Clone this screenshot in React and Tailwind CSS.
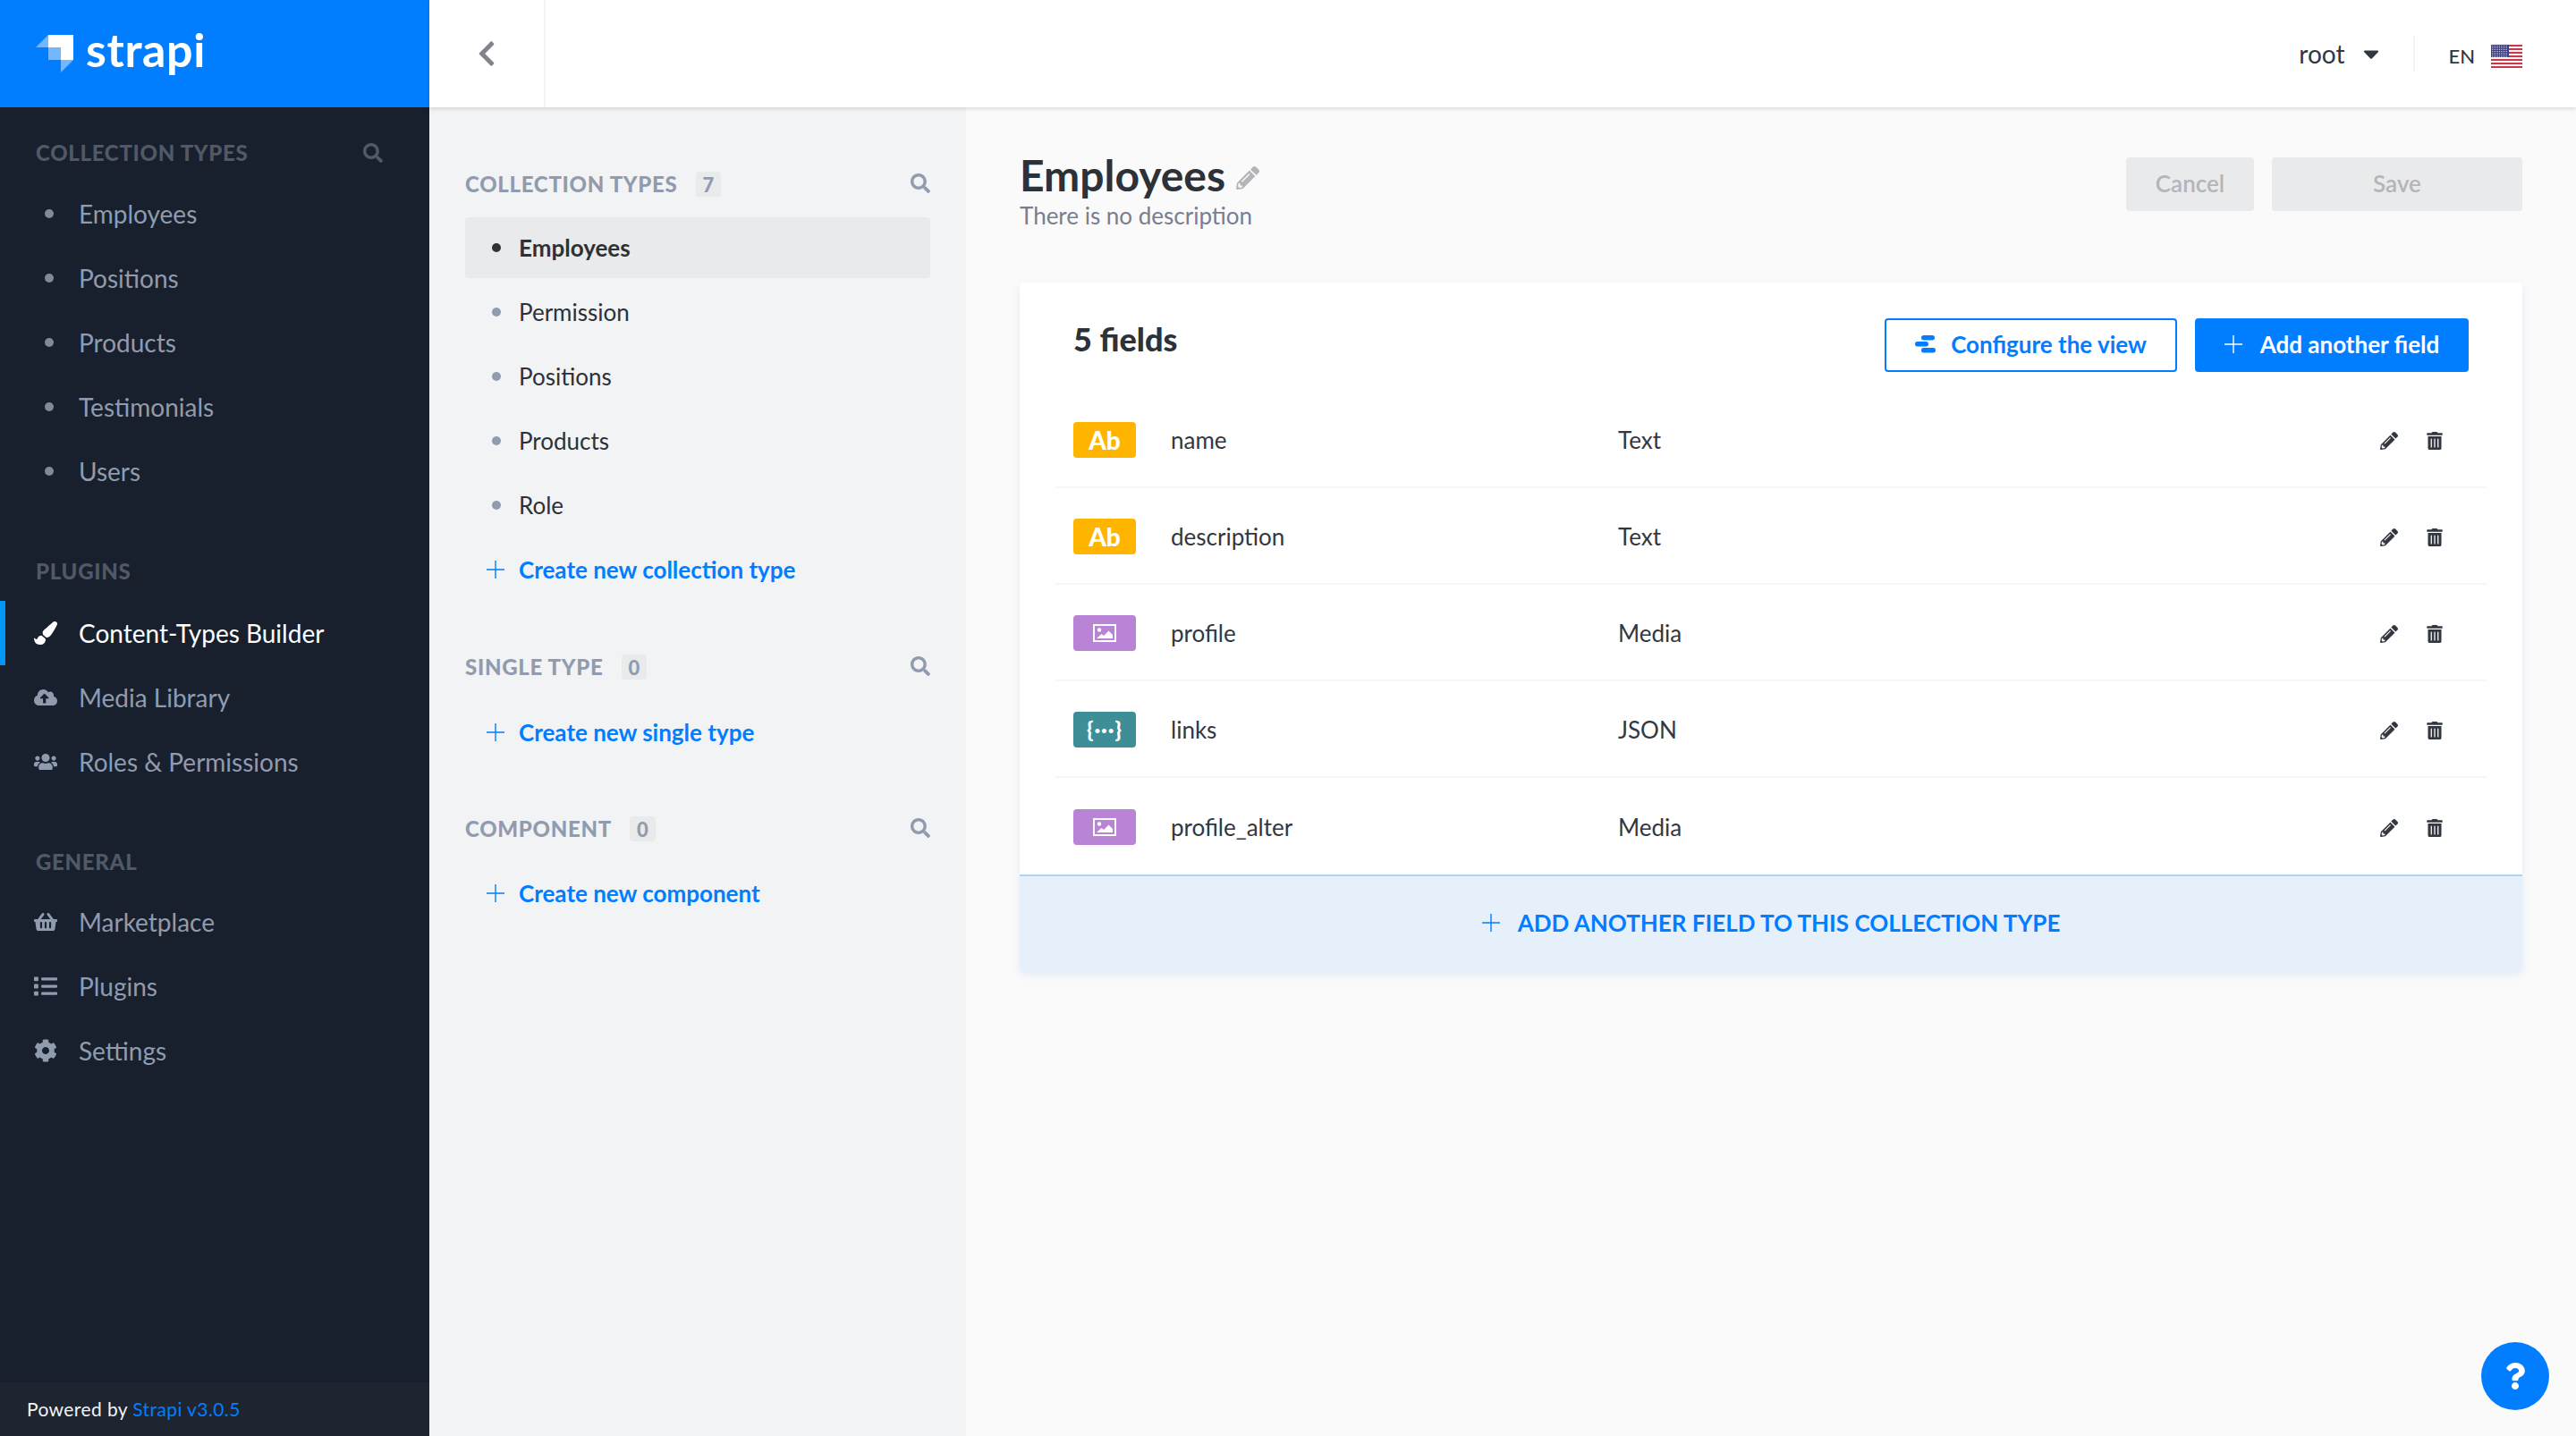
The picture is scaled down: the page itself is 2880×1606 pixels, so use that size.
import React from "react";
import {
  FaSearch, FaPaintBrush, FaCloudUploadAlt, FaUsers, FaShoppingBasket, FaList, FaCog,
  FaPencilAlt, FaTrashAlt, FaChevronLeft, FaCaretDown, FaQuestion,
} from "react-icons/fa";

const Logo = () => (
  <svg width="42" height="42" viewBox="0 0 42 42" className="shrink-0">
    <path d="M14 0H42V28H28V14H14Z" fill="#fff" />
    <path d="M0 14L14 0V14Z M14 14H28V28H14Z M28 28H42L28 42Z" fill="#fff" fillOpacity="0.45" />
  </svg>
);

const Plus = ({ className }) => (
  <svg viewBox="0 0 20 20" className={className} fill="none" stroke="currentColor" strokeWidth="1.4">
    <path d="M10 0V20M0 10H20" />
  </svg>
);

const Flag = () => {
  const stripes = [];
  for (let i = 0; i < 7; i++) stripes.push(<rect key={i} x="0" y={i * 4} width="35" height="2" fill="#c9384a" />);
  const dots = [];
  for (let r = 0; r < 7; r++) for (let c = 0; c < 9; c++) dots.push(<rect key={r + "-" + c} x={1 + c * 2} y={1 + r * 2} width="1" height="1" fill="#cfd3e6" />);
  return (
    <svg width="35" height="26" viewBox="0 0 35 26" className="shrink-0">
      <rect width="35" height="26" fill="#f2f2f2" rx="1" />
      {stripes}
      <rect width="20" height="14" fill="#3c3f78" />
      {dots}
    </svg>
  );
};

const ImageIcon = () => (
  <svg width="26" height="20" viewBox="0 0 26 20">
    <rect x="1" y="1" width="24" height="18" fill="none" stroke="#fff" strokeWidth="2" />
    <circle cx="7" cy="6.5" r="2.2" fill="#fff" />
    <path d="M4 16L9.5 11L12 13L17.5 7.5L22 12V16Z" fill="#fff" />
  </svg>
);

const ConfigIcon = () => (
  <svg width="24" height="20" viewBox="0 0 24 20" className="shrink-0" fill="#007eff">
    <rect x="7" y="0" width="15" height="5.5" rx="2.75" />
    <rect x="0" y="7" width="15" height="5.5" rx="2.75" />
    <rect x="7" y="14" width="16" height="5.5" rx="2.75" />
  </svg>
);

const SideHeading = ({ children, className }) => (
  <div className={`text-[24px] leading-[32px] font-black tracking-[0.7px] uppercase text-[#525966] ${className || ""}`}>{children}</div>
);

const SideItem = ({ label }) => (
  <div className="h-[72px] flex items-center pl-[50px]">
    <span className="w-[10px] h-[10px] rounded-full bg-[#818a9c] mr-[28px]" />
    <span className="text-[28px] text-[#919bae]">{label}</span>
  </div>
);

const IconItem = ({ icon: Icon, label, active }) => (
  <div className={`relative h-[72px] flex items-center pl-[38px] ${active ? "text-white" : "text-[#919bae]"}`}>
    {active && <span className="absolute left-0 top-0 w-[6px] h-[72px] bg-[#0097f7]" />}
    <span className="w-[26px] flex justify-center mr-[24px]"><Icon size={26} /></span>
    <span className="text-[28px]">{label}</span>
  </div>
);

const SubHeading = ({ title, count }) => (
  <div className="flex items-center h-[28px]">
    <span className="text-[24px] font-black tracking-[0.7px] uppercase text-[#919bae]">{title}</span>
    <span className="ml-[20px] h-[28px] min-w-[28px] px-[8px] rounded-[4px] bg-[#e9eaeb] flex items-center justify-center text-[22px] font-black text-[#919bae]">{count}</span>
    <FaSearch size={22} className="ml-auto -mt-[2px] text-[#919bae]" />
  </div>
);

const SubItem = ({ label, active }) => (
  <div className={`h-[68px] mb-[4px] flex items-center pl-[30px] rounded-[4px] ${active ? "bg-[#e9eaeb]" : ""}`}>
    <span className={`w-[10px] h-[10px] rounded-full mr-[20px] ${active ? "bg-[#2d3138]" : "bg-[#919bae]"}`} />
    <span className={`text-[26px] text-[#2d3138] ${active ? "font-bold" : ""}`}>{label}</span>
  </div>
);

const SubCreate = ({ label }) => (
  <div className="h-[68px] flex items-center pl-[24px] text-[#007eff]">
    <Plus className="w-[20px] h-[20px] mr-[16px]" />
    <span className="text-[26px] font-bold">{label}</span>
  </div>
);

const Badge = ({ type }) => {
  if (type === "text")
    return <div className="w-[70px] h-[40px] rounded-[4px] bg-[#ffb500] flex items-center justify-center text-white text-[28px] font-black">Ab</div>;
  if (type === "media")
    return <div className="w-[70px] h-[40px] rounded-[4px] bg-[#b983d6] flex items-center justify-center"><ImageIcon /></div>;
  return <div className="w-[70px] h-[40px] rounded-[4px] bg-[#3e8e98] flex items-center justify-center text-white text-[24px] font-black tracking-[1px]">{"{···}"}</div>;
};

const Row = ({ name, typeLabel, type, last }) => (
  <div className={`h-[108px] mx-[40px] px-[20px] pt-[2px] flex items-center ${last ? "" : "border-b-2 border-[#f6f6f6]"}`}>
    <Badge type={type} />
    <span className="ml-[39px] w-[500px] text-[26px] text-[#333740]">{name}</span>
    <span className="text-[26px] text-[#333740]">{typeLabel}</span>
    <span className="ml-auto mr-[28px] mt-[2px] flex items-center text-[#333740]">
      <FaPencilAlt size={20} />
      <FaTrashAlt size={20} className="ml-[31px]" />
    </span>
  </div>
);

export default function App() {
  return (
    <div className="flex w-[2880px] h-[1606px] overflow-hidden bg-[#fafafb] text-[#333740]" style={{ fontFamily: '"Lato", sans-serif' }}>
      <aside className="w-[480px] shrink-0 flex flex-col bg-[#18202e]">
        <div className="h-[120px] bg-[#007eff] flex items-center pl-[40px]">
          <Logo />
          <span className="ml-[14px] text-[52px] leading-none font-bold text-white -mt-[10px] tracking-[0.6px]">strapi</span>
        </div>
        <div className="flex-1 pt-[35px]">
          <div className="flex items-center justify-between pl-[40px] pr-[52px] mb-[16px]">
            <SideHeading>Collection Types</SideHeading>
            <FaSearch size={22} className="text-[#525966]" />
          </div>
          <SideItem label="Employees" />
          <SideItem label="Positions" />
          <SideItem label="Products" />
          <SideItem label="Testimonials" />
          <SideItem label="Users" />
          <SideHeading className="pl-[40px] mt-[60px] mb-[17px]">Plugins</SideHeading>
          <IconItem icon={FaPaintBrush} label="Content-Types Builder" active />
          <IconItem icon={FaCloudUploadAlt} label="Media Library" />
          <IconItem icon={FaUsers} label="Roles & Permissions" />
          <SideHeading className="pl-[40px] mt-[60px] mb-[15px]">General</SideHeading>
          <IconItem icon={FaShoppingBasket} label="Marketplace" />
          <IconItem icon={FaList} label="Plugins" />
          <IconItem icon={FaCog} label="Settings" />
        </div>
        <div className="h-[60px] bg-[#1e2530] flex items-center pl-[30px] text-[21px] tracking-[0.4px] text-[#f0f3f8]">
          Powered by&nbsp;<span className="text-[#007eff]">Strapi v3.0.5</span>
        </div>
      </aside>

      <div className="flex-1 flex flex-col min-w-0">
        <header className="relative z-10 h-[120px] bg-white flex items-center shadow-[0_2px_4px_rgba(0,0,0,0.12)]">
          <div className="w-[130px] h-full border-r-2 border-[#f4f4f5] flex items-center justify-center">
            <FaChevronLeft size={32} className="text-[#81848a]" />
          </div>
          <div className="ml-auto flex items-center pr-[60px]">
            <span className="text-[28px] text-[#333740]">root</span>
            <FaCaretDown size={28} className="ml-[16px] text-[#333740]" />
            <span className="ml-[33px] mr-[37px] w-[2px] h-[40px] bg-[#f4f4f5]" />
            <span className="text-[22px] font-medium text-[#333740] mr-[18px] mt-[4px]">EN</span>
            <span className="mt-[6px]"><Flag /></span>
          </div>
        </header>

        <div className="flex-1 flex min-h-0">
          <nav className="w-[600px] shrink-0 bg-[#f2f3f4] pl-[40px] pr-[40px] pt-[72px]">
            <SubHeading title="Collection Types" count="7" />
            <div className="mt-[23px]">
              <SubItem label="Employees" active />
              <SubItem label="Permission" />
              <SubItem label="Positions" />
              <SubItem label="Products" />
              <SubItem label="Role" />
              <SubCreate label="Create new collection type" />
            </div>
            <div className="mt-[61px]"><SubHeading title="Single Type" count="0" /></div>
            <div className="mt-[25px]"><SubCreate label="Create new single type" /></div>
            <div className="mt-[60px]"><SubHeading title="Component" count="0" /></div>
            <div className="mt-[24px]"><SubCreate label="Create new component" /></div>
          </nav>

          <main className="relative flex-1 pl-[60px] pr-[60px] pt-[50px] min-w-0">
            <div className="flex items-start justify-between h-[146px]">
              <div>
                <div className="flex items-center h-[58px] -mt-[3px]">
                  <h1 className="text-[48px] leading-[58px] font-bold text-[#2d3138]">Employees</h1>
                  <FaPencilAlt size={26} className="ml-[12px] mt-[6px] text-[#b3b5b9]" />
                </div>
                <p className="text-[26px] leading-[32px] text-[#787e8f]">There is no description</p>
              </div>
              <div className="flex gap-[20px] pt-[6px]">
                <div className="w-[143px] h-[60px] pb-[2px] rounded-[4px] bg-[#e9eaeb] flex items-center justify-center text-[26px] font-semibold text-[#b3b5b9]">Cancel</div>
                <div className="w-[280px] h-[60px] pb-[2px] rounded-[4px] bg-[#e9eaeb] flex items-center justify-center text-[26px] font-semibold text-[#b3b5b9]">Save</div>
              </div>
            </div>

            <section className="bg-white shadow-[0_4px_10px_#e3e9f3] rounded-[4px]">
              <div className="h-[122px] flex items-start pl-[60px] pr-[60px] pt-[38px]">
                <h2 className="text-[36px] leading-[50px] font-black text-[#2d3138]">5 fields</h2>
                <button className="ml-auto mt-[2px] w-[327px] h-[60px] pb-[2px] rounded-[4px] border-2 border-[#007eff] bg-white flex items-center justify-center text-[#007eff] text-[26px] font-bold">
                  <ConfigIcon /><span className="ml-[16px]">Configure the view</span>
                </button>
                <button className="ml-[20px] mt-[2px] w-[306px] h-[60px] pb-[2px] rounded-[4px] bg-[#007eff] flex items-center justify-center text-white text-[26px] font-bold">
                  <Plus className="w-[20px] h-[20px]" /><span className="ml-[20px]">Add another field</span>
                </button>
              </div>
              <Row name="name" typeLabel="Text" type="text" />
              <Row name="description" typeLabel="Text" type="text" />
              <Row name="profile" typeLabel="Media" type="media" />
              <Row name="links" typeLabel="JSON" type="json" />
              <Row name="profile_alter" typeLabel="Media" type="media" last />
              <div className="h-[108px] pb-[2px] bg-[#e6f0fb] border-t-2 border-[#aed4fb] flex items-center justify-center text-[#007eff] rounded-b-[4px]">
                <Plus className="w-[20px] h-[20px]" />
                <span className="ml-[20px] text-[26px] font-bold uppercase">Add another field to this collection type</span>
              </div>
            </section>

            <div className="absolute right-[30px] bottom-[29px] w-[76px] h-[76px] rounded-full bg-[#007eff] flex items-center justify-center text-white">
              <FaQuestion size={30} />
            </div>
          </main>
        </div>
      </div>
    </div>
  );
}
